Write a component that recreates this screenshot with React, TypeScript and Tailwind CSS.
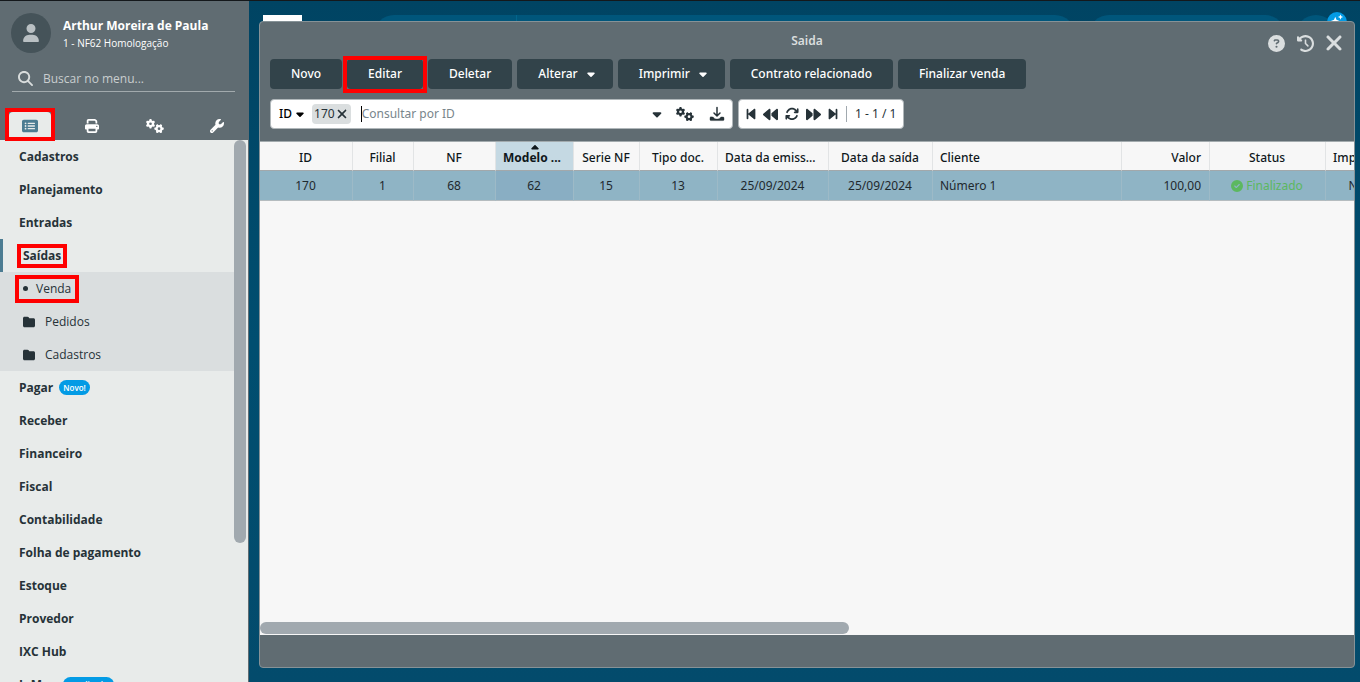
import type { ReactNode } from "react";
import {
  FaArrowsRotate,
  FaBackward,
  FaBackwardStep,
  FaCaretDown,
  FaCaretUp,
  FaCircleCheck,
  FaCircleQuestion,
  FaClockRotateLeft,
  FaFolder,
  FaForward,
  FaForwardStep,
  FaGears,
  FaMagnifyingGlass,
  FaPrint,
  FaRectangleList,
  FaUser,
  FaWrench,
  FaXmark,
} from "react-icons/fa6";

const menuTop = ["Cadastros", "Planejamento", "Entradas"];

const menuBottom = [
  { label: "Pagar", badge: "Novo!" },
  { label: "Receber" },
  { label: "Financeiro" },
  { label: "Fiscal" },
  { label: "Contabilidade" },
  { label: "Folha de pagamento" },
  { label: "Estoque" },
  { label: "Provedor" },
  { label: "IXC Hub" },
  { label: "InMap", badge: "Atualizado!" },
];

const columns = [
  { title: "ID", value: "170", width: "w-[93px]", align: "text-center" },
  { title: "Filial", value: "1", width: "w-[61px]", align: "text-center" },
  { title: "NF", value: "68", width: "w-[82px]", align: "text-center" },
  { title: "Modelo ...", value: "62", width: "w-[78px]", align: "text-center", sorted: true, cut: true },
  { title: "Serie NF", value: "15", width: "w-[66px]", align: "text-center" },
  { title: "Tipo doc.", value: "13", width: "w-[78px]", align: "text-center" },
  { title: "Data da emiss...", value: "25/09/2024", width: "w-[111px]", align: "text-center", cut: true },
  { title: "Data da saída", value: "25/09/2024", width: "w-[104px]", align: "text-center" },
  { title: "Cliente", value: "Número 1", width: "w-[189px]", align: "text-left" },
  { title: "Valor", value: "100,00", width: "w-[88px]", align: "text-right" },
  { title: "Status", value: "Finalizado", width: "w-[116px]", align: "text-center", status: true },
  { title: "Impresso", value: "Não", width: "w-[70px]", align: "text-center" },
];

const Highlight = ({ className }: { className: string }) => (
  <span className={`pointer-events-none absolute z-10 border-4 border-[#ff0000] ${className}`} />
);

const DownloadIcon = () => (
  <svg viewBox="0 0 16 16" className="size-4" fill="none" stroke="currentColor" strokeLinecap="round" strokeLinejoin="round">
    <path d="M8 1.6v8.2M5 7l3 3 3-3" strokeWidth="1.5" />
    <path
      d="M2 11h1.800c.5 0 .7.2 1 .7.6 1 1.700 1.400 3.200 1.400s2.600-.4 3.200-1.400c.3-.5.5-.7 1-.7H14c.6 0 1 .4 1 1v1.600c0 .6-.4 1-1 1H2c-.6 0-1-.4-1-1V12c0-.6.4-1 1-1Z"
      fill="currentColor"
      strokeWidth=".4"
    />
  </svg>
);

const MenuItem = ({ label, badge }: { label: string; badge?: string }) => (
  <li>
    <a href="#" className="flex h-[33px] items-center gap-1.5 pl-[19px] font-bold">
      {label}
      {badge && (
        <span className="rounded-full bg-[#039be5] px-1 text-[8px] leading-[15px] font-semibold text-white">{badge}</span>
      )}
    </a>
  </li>
);

const Sidebar = () => {
  return (
    <aside className="flex w-[249px] shrink-0 flex-col border-r border-[#606c72] bg-[#e8ebea] font-['Open_Sans',sans-serif] text-xs text-[#263238]">
      <header className="bg-[#606c72] text-white">
        <div className="flex items-center gap-3 px-[11px] pt-3">
          <span className="flex size-10 items-center justify-center rounded-full bg-[#455359] text-[#b9c0c3]">
            <FaUser className="size-[18px]" />
          </span>
          <div>
            <p className="leading-5 font-bold">Arthur Moreira de Paula</p>
            <p className="text-[10px] leading-[14px]">1 - NF62 Homologação</p>
          </div>
        </div>
        <label className="mr-[13px] ml-3 mt-[13px] flex h-[26px] items-center gap-[10px] border-b border-[#a2aaad] pl-1.5 text-[#d9dddd]">
          <FaMagnifyingGlass className="size-[15px]" />
          <input
            type="text"
            aria-label="Buscar no menu"
            placeholder="Buscar no menu..."
            className="min-w-0 flex-1 bg-transparent outline-none placeholder:text-[#c9cecf]"
          />
        </label>
        <div className="mt-5 flex justify-between pr-2.5 pl-[9px]">
          <div className="relative">
            <button type="button" aria-label="Menu" className="flex h-7 w-[42px] items-center justify-center rounded-t bg-[#e8ebea] text-[#4c7c92]">
              <FaRectangleList className="size-4" />
            </button>
            <Highlight className="-inset-x-1 -top-1 -bottom-px" />
          </div>
          <button type="button" aria-label="Imprimir" className="flex h-7 w-[42px] items-center justify-center">
            <FaPrint className="size-[14px]" />
          </button>
          <button type="button" aria-label="Configurações" className="flex h-7 w-[42px] items-center justify-center">
            <FaGears className="size-[18px]" />
          </button>
          <button type="button" aria-label="Ferramentas" className="flex h-7 w-[42px] items-center justify-center">
            <FaWrench className="size-[14px]" />
          </button>
        </div>
      </header>

      <nav className="flex min-h-0 flex-1">
        <ul className="min-w-0 flex-1 overflow-hidden">
          {menuTop.map((label) => (
            <MenuItem key={label} label={label} />
          ))}
          <li>
            <a href="#" className="flex h-[33px] items-center border-l-[3px] border-[#4c7c92] pl-5 font-bold">
              <span className="relative">
                Saídas
                <Highlight className="-inset-x-1.5 -inset-y-1" />
              </span>
            </a>
            <ul className="bg-[#dadedf]">
              <li>
                <a href="#" className="flex h-[33px] items-center pl-[23px]">
                  <span className="relative flex items-center gap-2">
                    <span className="size-[5px] rounded-full bg-current" />
                    Venda
                    <Highlight className="-inset-x-2 -inset-y-1.5" />
                  </span>
                </a>
              </li>
              {["Pedidos", "Cadastros"].map((label) => (
                <li key={label}>
                  <a href="#" className="flex h-[33px] items-center gap-[10px] pl-[23px]">
                    <FaFolder className="size-3" />
                    {label}
                  </a>
                </li>
              ))}
            </ul>
          </li>
          {menuBottom.map((item) => (
            <MenuItem key={item.label} {...item} />
          ))}
        </ul>
        <div className="w-[14px]">
          <div className="h-[403px] w-3 rounded-full bg-[#a1a9af]" />
        </div>
      </nav>
    </aside>
  );
};

const ToolButton = ({ children, caret }: { children: ReactNode; caret?: boolean }) => (
  <button
    type="button"
    className={`flex h-[30px] items-center gap-[7px] rounded bg-[#32434a] font-medium text-white ${
      caret ? "pr-4 pl-[21px]" : "px-[21px]"
    }`}
  >
    {children}
    {caret && <FaCaretDown className="size-3" />}
  </button>
);

const Toolbar = () => (
  <div className="flex gap-[5px] px-[10px]">
    <ToolButton>Novo</ToolButton>
    <div className="relative">
      <ToolButton>Editar</ToolButton>
      <Highlight className="-inset-x-1 -top-[3px] -bottom-1" />
    </div>
    <ToolButton>Deletar</ToolButton>
    <ToolButton caret>Alterar</ToolButton>
    <ToolButton caret>Imprimir</ToolButton>
    <ToolButton>Contrato relacionado</ToolButton>
    <ToolButton>Finalizar venda</ToolButton>
  </div>
);

const SearchBar = () => (
  <div className="mt-[10px] flex gap-[5px] px-[10px] text-[#263238]">
    <div className="flex h-[30px] w-[463px] items-center rounded border border-[#b0b7ba] bg-white pr-[7px] pl-2">
      <button type="button" className="flex items-center gap-0.5 font-medium text-black">
        ID
        <FaCaretDown className="size-3" />
      </button>
      <span className="ml-1.5 flex h-5 items-center rounded bg-[#dadedf] px-0.5">
        170
        <button type="button" aria-label="Remover filtro">
          <FaXmark className="size-[14px]" />
        </button>
      </span>
      <span className="ml-[10px] h-4 w-px bg-black" />
      <input
        type="text"
        aria-label="Consultar por ID"
        placeholder="Consultar por ID"
        className="min-w-0 flex-1 bg-transparent outline-none placeholder:text-[#78858b]"
      />
      <button type="button" aria-label="Mais opções">
        <FaCaretDown className="size-[14px]" />
      </button>
      <button type="button" aria-label="Configurar" className="ml-3">
        <FaGears className="size-[18px]" />
      </button>
      <button type="button" aria-label="Exportar" className="ml-[15px]">
        <DownloadIcon />
      </button>
    </div>
    <div className="flex h-[30px] items-center rounded border border-[#b0b7ba] bg-white px-[7px]">
      <div className="flex items-center gap-[7px]">
        <button type="button" aria-label="Primeira página">
          <FaBackwardStep className="h-[14px] w-2.5" />
        </button>
        <button type="button" aria-label="Página anterior">
          <FaBackward className="size-[15px]" />
        </button>
        <button type="button" aria-label="Atualizar">
          <FaArrowsRotate className="size-[14px]" />
        </button>
        <button type="button" aria-label="Próxima página">
          <FaForward className="size-[15px]" />
        </button>
        <button type="button" aria-label="Última página">
          <FaForwardStep className="h-[14px] w-2.5" />
        </button>
      </div>
      <span className="ml-2 h-4 w-px bg-[#a1a9af]" />
      <span className="ml-2">1 - 1 / 1</span>
    </div>
  </div>
);

const Grid = () => (
  <div className="mt-3 flex flex-1 flex-col overflow-hidden border-t border-[#a2aaad] bg-[#f7f7f7]">
    <div className="flex-1 overflow-hidden">
      <table className="w-[2036px] table-fixed border-separate border-spacing-0 text-[#1f292e]">
        <thead>
          <tr className="h-[29px]">
            {columns.map((col) => (
              <th
                key={col.title}
                className={`relative overflow-hidden border-r border-b border-r-[#e2e4e5] border-b-[#a2a8ab] p-0 pt-[3px] pr-2 pl-[7px] whitespace-nowrap text-[#0f171b] ${col.width} ${
                  col.cut ? "text-left" : col.align
                } ${col.sorted ? "bg-[#c5d9e3] font-bold" : "font-medium"}`}
              >
                {col.sorted && <FaCaretUp className="absolute inset-x-0 top-0 mx-auto size-3" />}
                {col.title}
              </th>
            ))}
            <th className="border-b border-[#a2a8ab]" />
          </tr>
        </thead>
        <tbody>
          <tr className="h-[30px] bg-[#8fb4c5]">
            {columns.map((col) => (
              <td
                key={col.title}
                className={`border-r border-b border-r-[#9dbac7] border-b-[#b5bcbf] p-0 pr-2 pl-[7px] whitespace-nowrap ${col.align} ${
                  col.sorted ? "bg-[#89aec3]" : ""
                }`}
              >
                {col.status ? (
                  <span className="flex items-center justify-center gap-[3px] text-[#5cb860]">
                    <FaCircleCheck className="size-3" />
                    {col.value}
                  </span>
                ) : (
                  col.value
                )}
              </td>
            ))}
            <td className="border-b border-[#b5bcbf]" />
          </tr>
        </tbody>
      </table>
    </div>
    <div className="h-[13px]">
      <div className="h-3 w-[589px] rounded-full bg-[#a1a9af]" />
    </div>
  </div>
);

const SalesWindow = () => (
  <section className="relative flex flex-1 flex-col overflow-hidden rounded border border-[#869297] bg-[#606c72] font-['Noto_Sans',sans-serif] text-xs">
    <header className="relative flex h-[37px] items-center justify-center">
      <h1 className="font-semibold text-[#dadedf]">Saida</h1>
      <div className="absolute top-[9px] right-2 flex items-center gap-3 text-[#dadedf]">
        <button type="button" aria-label="Ajuda">
          <FaCircleQuestion className="size-[17px]" />
        </button>
        <button type="button" aria-label="Histórico">
          <FaClockRotateLeft className="size-[17px]" />
        </button>
        <button type="button" aria-label="Fechar" className="-ml-1">
          <FaXmark className="size-6" />
        </button>
      </div>
    </header>
    <Toolbar />
    <SearchBar />
    <Grid />
    <footer className="h-8" />
  </section>
);

// Only the top edge of the system header shows above the window
const SystemHeader = () => (
  <div className="absolute inset-x-0 top-[14px] h-10">
    <div className="absolute left-[14px] h-10 w-[39px] bg-white" />
    <div className="absolute right-[285px] left-[125px] flex h-10 rounded-full bg-[#00567b]">
      <span className="ml-[142px] w-px bg-[#03658c]" />
    </div>
    <div className="absolute right-[75px] left-[840px] h-10 rounded-full bg-[#00567b]" />
    <div className="absolute right-6 size-10 rounded-full bg-[#00567b]" />
    <div className="absolute -top-[3px] right-[13px] flex size-5 justify-center rounded-full bg-[#039be5]">
      <svg viewBox="0 0 16 16" className="mt-0.5 size-3.5 fill-white">
        <path d="M6 3 7.4 6.6 11 8 7.4 9.4 6 13 4.600 9.400 1 8l3.600-1.400ZM12 .5l.9 2.100 2.100.9-2.100.9L12 6.500l-.9-2.100L9 3.500l2.100-.9Z" />
      </svg>
    </div>
  </div>
);

const App = () => {
  return (
    <div className="flex h-screen overflow-hidden border-t border-[#14181b] bg-[#034b6c]">
      <Sidebar />
      <main className="relative flex min-w-0 flex-1 flex-col bg-gradient-to-b from-[#004463] via-[#004e70] to-[#034b6c] pt-5 pr-[5px] pb-[14px] pl-[10px]">
        <SystemHeader />
        <SalesWindow />
      </main>
    </div>
  );
};

export default App;
